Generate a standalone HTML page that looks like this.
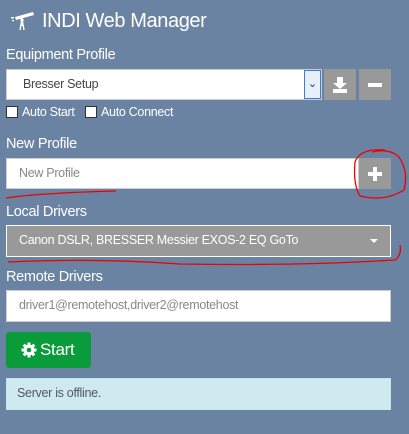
<!DOCTYPE html>
<html><head><meta charset="utf-8"><style>
*{box-sizing:border-box;margin:0;padding:0}
body{width:409px;height:434px;background:#6b83a3;font-family:"Liberation Sans",sans-serif;position:relative;overflow:hidden}
.a{position:absolute}
.lbl{color:#fff;font-size:14.5px;letter-spacing:-0.3px}
.box{background:#fff;border:1px solid #ccc}
.btn{background:#999;color:#fff}
.s{font-size:12.5px;letter-spacing:-0.3px}
</style></head><body>
<svg class="a" style="left:11px;top:11px" width="24" height="20" viewBox="0 0 24 20">
<g fill="#fff"><path d="M4 6 L22 1 L23 4 L5 9Z"/><rect x="0" y="6" width="3" height="1.5"/><rect x="1" y="9" width="2" height="1.2"/>
<path d="M11 8 L9 19 M11 8 L13 19 M10 14 H12" stroke="#fff" stroke-width="1.4" fill="none"/><circle cx="11" cy="9" r="1.6"/></g></svg>
<div class="a" style="left:42px;top:10px;color:#fff;font-size:20px;letter-spacing:-0.4px">INDI Web Manager</div>
<div class="a lbl" style="left:6px;top:47px">Equipment Profile</div>
<div class="a box" style="left:6px;top:69px;width:316px;height:31px"></div>
<div class="a s" style="left:23px;top:77px;color:#444">Bresser Setup</div>
<div class="a" style="left:304px;top:70px;width:17px;height:29px;border:1px solid #3b7dd8;background:#e6f0fa;color:#333;font-size:11px;text-align:center;line-height:26px">&#8964;</div>
<div class="a btn" style="left:324px;top:69px;width:32px;height:31px"><svg width="32" height="31"><path d="M13 8h6v6h4l-7 6-7-6h4z" fill="#fff"/><rect x="9" y="20" width="14" height="4" fill="#fff"/></svg></div>
<div class="a btn" style="left:359px;top:69px;width:32px;height:31px"><div class="a" style="left:9px;top:14px;width:14px;height:4px;background:#fff"></div></div>
<div class="a" style="left:6px;top:106px;width:12px;height:12px;background:#fff;border:1px solid #333"></div>
<div class="a s" style="left:22px;top:105px;color:#fff">Auto Start</div>
<div class="a" style="left:85px;top:106px;width:12px;height:12px;background:#fff;border:1px solid #333"></div>
<div class="a s" style="left:101px;top:105px;color:#fff">Auto Connect</div>
<div class="a lbl" style="left:6px;top:136px">New Profile</div>
<div class="a box" style="left:6px;top:158px;width:353px;height:31px"></div>
<div class="a s" style="left:19px;top:166px;color:#888">New Profile</div>
<div class="a btn" style="left:359px;top:158px;width:32px;height:31px"><div class="a" style="left:9px;top:14px;width:14px;height:4px;background:#fff"></div><div class="a" style="left:14px;top:9px;width:4px;height:14px;background:#fff"></div></div>
<div class="a lbl" style="left:6px;top:204px">Local Drivers</div>
<div class="a" style="left:6px;top:225px;width:385px;height:32px;background:#999;border:1px solid #fff"></div>
<div class="a s" style="left:19px;top:233px;color:#fff">Canon DSLR, BRESSER Messier EXOS-2 EQ GoTo</div>
<div class="a" style="left:370px;top:239px;border-left:4px solid transparent;border-right:4px solid transparent;border-top:4px solid #fff"></div>
<div class="a lbl" style="left:6px;top:269px">Remote Drivers</div>
<div class="a box" style="left:6px;top:290px;width:385px;height:32px"></div>
<div class="a s" style="left:19px;top:298px;color:#888">driver1@remotehost,driver2@remotehost</div>
<div class="a" style="left:6px;top:332px;width:85px;height:36px;background:#0a9c3a;border-radius:3px;color:#fff">
<svg class="a" style="left:15px;top:10px" width="16" height="16" viewBox="0 0 16 16"><g fill="#fff"><circle cx="8" cy="8" r="5.5"/><g stroke="#fff" stroke-width="3"><path d="M8 0.5V15.5M0.5 8H15.5M2.7 2.7L13.3 13.3M13.3 2.7L2.7 13.3"/></g></g><circle cx="8" cy="8" r="2.3" fill="#0a9c3a"/></svg>
<span class="a" style="left:34px;top:8px;font-size:17px;letter-spacing:-0.3px">Start</span></div>
<div class="a" style="left:6px;top:378px;width:385px;height:32px;background:#d0e9ee;border:1px solid #bce8f1"></div>
<div class="a s" style="left:17px;top:386px;color:#4a5a66">Server is offline.</div>
<svg class="a" style="left:0;top:0" width="409" height="434">
<g stroke="#e00" stroke-width="1.3" fill="none">
<path d="M6 198 Q40 193 116 191"/>
<path d="M385 150 Q360 148 355 162 Q353 185 360 196 Q385 202 404 190 Q409 170 398 156 Q388 148 372 152"/>
<path d="M8 262 Q100 258 180 264 Q300 266 395 260 Q402 255 400 245"/>
</g></svg>
</body></html>
